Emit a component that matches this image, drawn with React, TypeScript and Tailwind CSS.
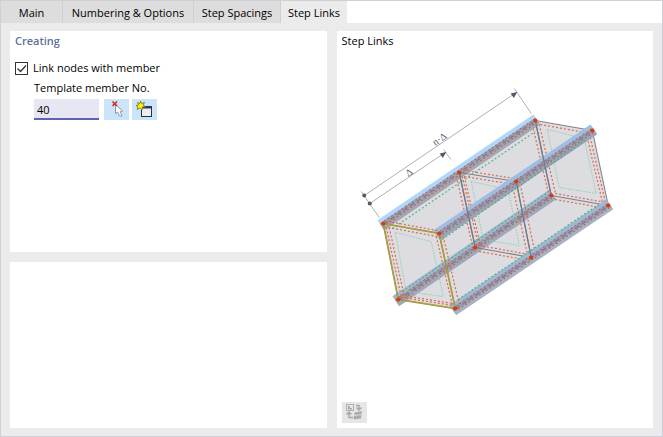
import { useState } from "react";
import type { ReactNode } from "react";

type Point = [number, number];

const frames: Point[][] = [
  [[383, 223], [439, 233], [455, 308], [398, 299]],
  [[459, 172], [516, 181], [531, 257], [475, 247]],
  [[535, 120], [592, 130], [608, 205], [551, 195]],
];

const toPoints = (points: Point[]) => points.map((p) => p.join(",")).join(" ");

function innerOutline([a, b, c, d]: Point[]): Point[] {
  return [
    [a[0] + 12, a[1] + 9],
    [b[0] - 8, b[1] + 8],
    [c[0] - 12, c[1] - 12],
    [d[0] + 8, d[1] - 8],
  ];
}

interface RailProps {
  from: Point;
  to: Point;
  top: string;
  body: string;
  bottom: string;
}

function Rail({ from, to, top, body, bottom }: RailProps) {
  const length = Math.hypot(to[0] - from[0], to[1] - from[1]);
  const angle = (Math.atan2(to[1] - from[1], to[0] - from[0]) * 180) / Math.PI;
  return (
    <g transform={`translate(${from[0]} ${from[1]}) rotate(${angle})`}>
      <rect x={-3} y={-6} width={length + 5} height={5} fill={top} />
      <rect x={-3} y={-2} width={length + 5} height={5} fill={body} />
      <rect x={-3} y={2} width={length + 5} height={4} fill={bottom} />
      <path d={`M0 0.500H${length}`} stroke="#6d6a80" strokeWidth={1.3} strokeDasharray="5 3" opacity={0.7} />
      <path d={`M2 -1.500H${length}M2 2.500H${length}`} stroke="#c4563f" strokeWidth={1} strokeDasharray="1.8 2.4" />
    </g>
  );
}

interface FrameProps {
  frame: Point[];
  color: string;
  width: number;
  // Horizontal offsets of the dashed outlines beside each upright.
  left: number[];
  right: number[];
  // Vertical offsets of the dashed outlines along the top and the bottom.
  top: number[];
  bottom: number[];
}

function FrameLines({ frame, color, width, left, right, top, bottom }: FrameProps) {
  const [a, b, c, d] = frame;
  return (
    <g fill="none">
      <polygon points={toPoints(innerOutline(frame))} stroke="#8fd0ae" strokeWidth={1} strokeDasharray="1.5 1.2" />
      <g stroke="#dc6c4d" strokeWidth={1.2} strokeDasharray="2 2">
        {left.map((o) => <path key={`l${o}`} d={`M${a[0] + o} ${a[1] + 4}L${d[0] + o} ${d[1] - 3}`} />)}
        {right.map((o) => <path key={`r${o}`} d={`M${b[0] + o} ${b[1] + 3}L${c[0] + o} ${c[1] - 4}`} />)}
        {top.map((o) => <path key={`t${o}`} d={`M${a[0] + 5} ${a[1] + 1 + o}L${b[0] - 2} ${b[1] + o}`} />)}
        {bottom.map((o) => <path key={`b${o}`} d={`M${d[0] + 4} ${d[1] + 1 + o}L${c[0] - 2} ${c[1] + o}`} />)}
      </g>
      <polygon points={toPoints(frame)} stroke={color} strokeWidth={width} />
    </g>
  );
}

function StepLinksDiagram() {
  const [near, middle, far] = frames;
  const green: Point[][] = [
    [[392, 228], [535, 131]],
    [[402, 291], [546, 193]],
    [[442, 239], [586, 139]],
    [[458, 299], [600, 203]],
  ];
  return (
    <svg viewBox="337 51 316 351" className="block min-h-0 w-full flex-1" role="img" aria-label="Step links between members">
      <g transform="translate(0 0.500)">
        <polygon points={toPoints([near[0], far[0], far[1], far[2], near[2], near[3]])} fill="#dddce1" />
        <Rail from={near[3]} to={far[3]} top="#a0b7d4" body="#999eb0" bottom="#9fa8bb" />
        <FrameLines frame={far} color="#85868f" width={1.1} left={[-3, 4]} right={[-3, -6]} top={[3]} bottom={[-3, 3]} />
        <Rail from={near[0]} to={far[0]} top="#b0d6fb" body="#9ba1b1" bottom="#a5a6b2" />
        <FrameLines frame={middle} color="#7d7f8c" width={1.1} left={[-3, 3, 5]} right={[-4, 4]} top={[-3, 3]} bottom={[-3, 3]} />
        <Rail from={near[1]} to={far[1]} top="#9dbde3" body="#999fb3" bottom="#9ba4ba" />
        <Rail from={near[2]} to={far[2]} top="#9fb7d6" body="#999eb0" bottom="#a8b2c5" />
        <path
          d={green.map(([p, q]) => `M${p[0]} ${p[1]}L${q[0]} ${q[1]}`).join("")}
          stroke="#45b57b"
          strokeWidth={1.2}
          strokeDasharray="1.8 2.2"
        />
        <path d="M459 172L475 247M516 181L531 257M535 120L551 195" stroke="#74778a" strokeWidth={1.2} />
        <FrameLines frame={near} color="#8b832d" width={1.6} left={[3, 6]} right={[-3, 4]} top={[-3, 3]} bottom={[-5, -3]} />
        <polygon points={toPoints(near)} fill="none" stroke="#d3c95b" strokeWidth={0.5} />
        {frames.flat().map(([x, y]) => (
          <circle key={`${x}-${y}`} cx={x} cy={y} r={2.1} fill="#d83b0b" />
        ))}
      </g>
      <g stroke="#b0b0b5" strokeWidth={1} fill="none">
        <path d="M364 195.500L516 92.500M369.500 203.500L445 152.500" />
        <path d="M361 191.500L379 217.500M514 88.500L531 113.500M443.500 149.500L450.500 159.500" />
      </g>
      <g fill="#55546a">
        <circle cx={364} cy={195.5} r={2} />
        <circle cx={369.5} cy={203.5} r={2} />
        <path d="M517 92L510.500 93.500L513.500 98ZM446 152L439.500 153.500L442.500 158Z" />
      </g>
      <g fontFamily="'Liberation Serif', serif" fontSize={10} fill="#5c5b70">
        <text transform="translate(435 146) rotate(-34)">n·Δ</text>
        <text transform="translate(408 177) rotate(-34)">Δ</text>
      </g>
    </svg>
  );
}

function PickIcon() {
  return (
    <svg width="25" height="21" viewBox="0 0 25 21" aria-hidden="true">
      <path d="M11.500 5.500V14.500L13.500 13L15.500 17H18L16.200 12.500L18.500 12Z" fill="#fff" stroke="#929aa5" />
      <path d="M8.500 2.500L13 7M13 2.500L8.500 7" stroke="#df1b28" strokeWidth="1.5" />
    </svg>
  );
}

function NewMemberIcon() {
  return (
    <svg width="25" height="21" viewBox="0 0 25 21" aria-hidden="true">
      <rect x="9.500" y="7.500" width="10" height="10" fill="#eee" stroke="#303030" />
      <path d="M10 8.500H19" stroke="#203b91" strokeWidth="2" />
      <path d="M8.500 2L9.500 4.500L12.500 3.500L11 6L13.500 7.500L10.500 8L10 11L8 9L5 10.500L6 8L4 6.500L6.500 6L5.500 3.500L8 4.500Z" fill="#ffed16" stroke="#747317" strokeWidth="0.8" />
    </svg>
  );
}

function SwapViewIcon() {
  return (
    <svg width="25" height="21" viewBox="0 0 25 21" fill="none" aria-hidden="true">
      <rect x="4.500" y="2.500" width="7" height="6" stroke="#b0b0b0" />
      <path d="M6 4H8V6H10V7.500H6Z" fill="#aaa" />
      <path d="M14 3.500H17V7M14.500 5.500L17 8L19.500 5.500M11 15.500H7V11M4.500 12.500L7 10L9.500 12.500" stroke="#a7a7a7" strokeWidth="1.4" />
      <path d="M12.500 10.500L20 9L19 16.500L11.500 17.500Z" fill="#acacac" />
      <path d="M12 13.500L20 12.500" stroke="#ddd" />
    </svg>
  );
}

function IconButton({ label, className, children }: { label: string; className: string; children: ReactNode }) {
  return (
    <button type="button" aria-label={label} className={`block h-[21px] w-[25px] ${className}`}>
      {children}
    </button>
  );
}

const tabs = [
  { name: "Main", width: "w-[62px]" },
  { name: "Numbering & Options", width: "w-[131px]" },
  { name: "Step Spacings", width: "w-[87px]" },
  { name: "Step Links", width: "w-[66px]" },
];

export default function App() {
  const [linked, setLinked] = useState(true);
  const [member, setMember] = useState("40");
  const [active, setActive] = useState("Step Links");
  return (
    <div className="flex h-screen flex-col border border-[#d0cfd7] bg-[#ebebeb] font-['Open_Sans','Noto_Sans',sans-serif] text-[11px] leading-4 text-black">
      <div role="tablist" className="flex h-[22px] shrink-0 bg-white">
        {tabs.map(({ name, width }) => (
          <button
            key={name}
            type="button"
            role="tab"
            aria-selected={name === active}
            onClick={() => setActive(name)}
            className={`${width} shrink-0 whitespace-nowrap pt-0.5 ${name === active ? "bg-[#ebebeb]" : "border-r border-[#d0d0d0] bg-[#dddddd]"}`}
          >
            {name}
          </button>
        ))}
      </div>
      <main className="grid min-h-0 flex-1 grid-cols-2 gap-[10px] px-[9px] py-2">
        <div className="grid min-h-0 grid-rows-[4fr_3fr] gap-[10px]">
          <section className="bg-white px-[5px] py-0.5">
            <h2 className="font-semibold text-[#5d7198]">Creating</h2>
            <label className="mt-[11px] flex items-center gap-[5px]">
              <span className="relative flex size-[13px]">
                <input
                  type="checkbox"
                  checked={linked}
                  onChange={(e) => setLinked(e.target.checked)}
                  className="size-[13px] appearance-none border border-[#333] bg-white"
                />
                {linked && (
                  <svg viewBox="0 0 13 13" className="pointer-events-none absolute inset-0" fill="none" aria-hidden="true">
                    <path d="M2.500 6.500L5.500 9.500L11 3.500" stroke="#333" strokeWidth="1.3" />
                  </svg>
                )}
              </span>
              Link nodes with member
            </label>
            <div className="mt-1 pl-[19px]">
              <label htmlFor="template-member" className="block">Template member No.</label>
              <div className="mt-[3px] flex items-start">
                <input
                  id="template-member"
                  value={member}
                  onChange={(e) => setMember(e.target.value)}
                  className="h-[21px] w-[65px] border-b-2 border-[#6263ad] bg-[#e7e7f3] px-[3px] pt-0.5 outline-none"
                />
                <IconButton label="Select member" className="ml-[5px] bg-[#cce4f7]"><PickIcon /></IconButton>
                <IconButton label="New member" className="ml-[3px] bg-[#cce4f7]"><NewMemberIcon /></IconButton>
              </div>
            </div>
          </section>
          <section className="bg-white" />
        </div>
        <section className="flex min-h-0 flex-col bg-white">
          <h2 className="px-[5px] py-0.5">Step Links</h2>
          <StepLinksDiagram />
          <div className="px-[5px] pb-[5px]">
            <IconButton label="Switch view" className="bg-[#e6e6e6]"><SwapViewIcon /></IconButton>
          </div>
        </section>
      </main>
    </div>
  );
}
